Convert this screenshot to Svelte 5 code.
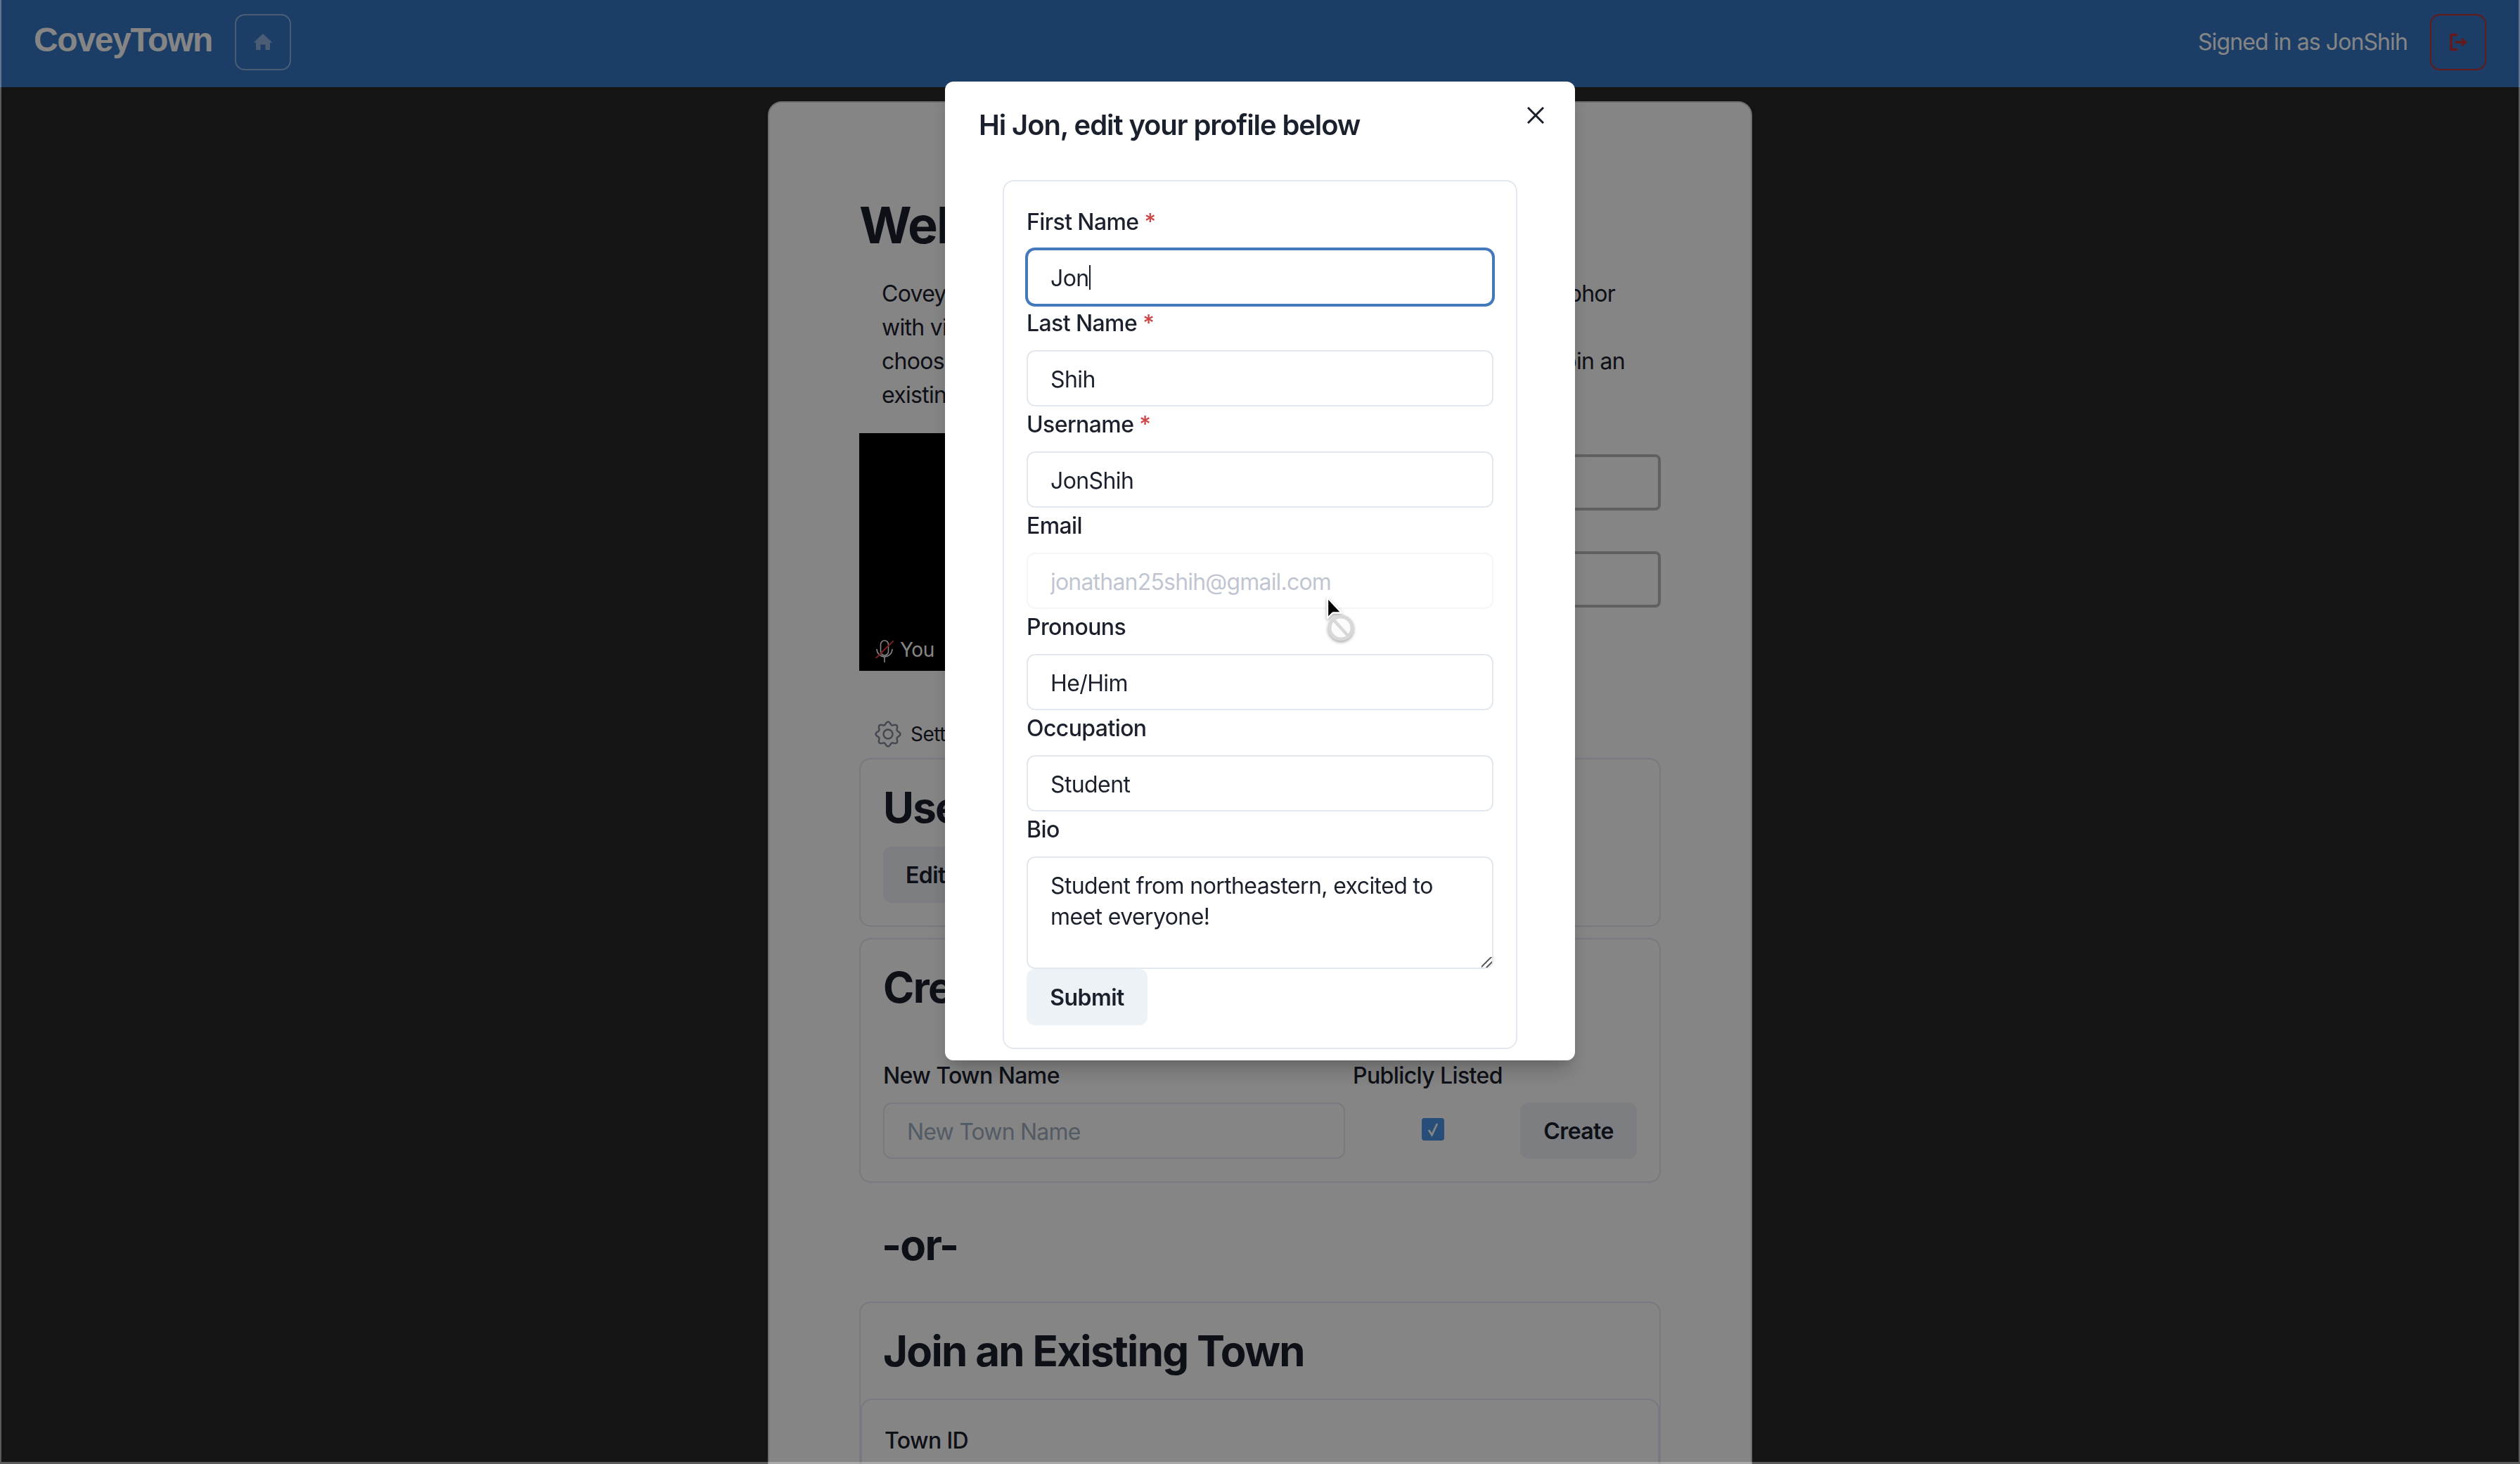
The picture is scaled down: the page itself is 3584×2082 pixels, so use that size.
<script>
  // profile modal fields, in form order
  const fields = [
    { label: "First Name", value: "Jon", required: true, focused: true },
    { label: "Last Name", value: "Shih", required: true },
    { label: "Username", value: "JonShih", required: true },
    { label: "Email", value: "jonathan25shih@gmail.com", disabled: true },
    { label: "Pronouns", value: "He/Him" },
    { label: "Occupation", value: "Student" }
  ];

  // gear outline: wavy circle with 8 lobes
  function gearPath(cx, cy, r, wave) {
    let d = "";
    for (let i = 0; i <= 160; i++) {
      const a = (i / 160) * Math.PI * 2 - Math.PI / 2;
      const rad = r + wave * Math.cos(a * 8);
      const x = cx + rad * Math.cos(a);
      const y = cy + rad * Math.sin(a);
      d += (i ? "L" : "M") + x.toFixed(2) + " " + y.toFixed(2);
    }
    return d + "Z";
  }
</script>

<div class="page">
  <header class="nav">
    <span class="logo">CoveyTown</span>
    <button class="nav-btn home" aria-label="Home">
      <svg width="28" height="24" viewBox="0 0 28 24"><path d="M14 0L27.5 12.5H24V23H17.5V15.5H10.5V23H4V12.5H.5Z" fill="currentColor"/></svg>
    </button>
    <span class="signed">Signed in as JonShih</span>
    <button class="nav-btn logout" aria-label="Sign out">
      <svg width="26" height="26" viewBox="0 0 26 26" fill="none" stroke="currentColor" stroke-width="3.4"><path d="M12 2.5H3V23.5H12"/><path d="M9 13H23"/><path d="M18 8l6 5-6 5" stroke-width="2.6"/></svg>
    </button>
  </header>

  <main class="card">
    <h1>Welcome to Covey.Town!</h1>
    <p class="intro">
      Covey.Town is a social platform that integrates a 2D game-like metaphor
      with video chat. To get started, setup your camera and microphone,
      choose a username, and then create a new town to hang out in, or join an
      existing town.
    </p>

    <div class="preview">
      <div class="video">
        <svg width="26" height="32" viewBox="0 0 26 32" fill="none" stroke="#fff" stroke-width="1.6">
          <rect x="7.5" y="1" width="11" height="21" rx="5.5"/>
          <path d="M2 13a11 11 0 0 0 22 0M13 24v8"/>
          <path d="M.7 26L25.7 1.3" stroke="#e53e3e" stroke-width="2"/>
        </svg>
        <span>You</span>
      </div>
      <div class="selects">
        <div class="select"></div>
        <div class="select"></div>
      </div>
    </div>

    <div class="settings">
      <svg width="38" height="38" viewBox="0 0 38 38" fill="none" stroke="#7f899b" stroke-width="2.4">
        <path d={gearPath(19, 19, 15.6, 1.9)}/>
        <circle cx="19" cy="19" r="6.5"/>
      </svg>
      <span>Settings</span>
    </div>

    <section class="box">
      <h2>User Profile</h2>
      <button class="grey edit">Edit Profile</button>
    </section>

    <section class="box">
      <h2>Create a New Town</h2>
      <div class="create-row">
        <div class="town-name">
          <span class="label">New Town Name</span>
          <input class="input" placeholder="New Town Name" />
        </div>
        <div class="listed">
          <span class="label">Publicly Listed</span>
          <span class="check">
            <svg width="20" height="22" viewBox="0 0 20 22" fill="none" stroke="#fff" stroke-width="2.8"><path d="M4 12l4.5 7 7.5-16"/></svg>
          </span>
        </div>
        <button class="grey create">Create</button>
      </div>
    </section>

    <h2 class="or">-or-</h2>

    <section class="box join">
      <h2>Join an Existing Town</h2>
      <div class="inner">
        <span class="label">Town ID</span>
      </div>
    </section>
  </main>
</div>

<div class="overlay">
  <div class="modal">
    <h2 class="modal-title">Hi Jon, edit your profile below</h2>
    <button class="close" aria-label="Close">
      <svg width="24" height="24" viewBox="0 0 24 24" stroke="currentColor" stroke-width="3"><path d="M1 1L23 23M23 1L1 23"/></svg>
    </button>
    <div class="modal-body">
      <form class="profile">
        {#each fields as f}
          <span class="label">{f.label}{#if f.required}<span class="req">*</span>{/if}</span>
          <div class="field">
            <input class="input" class:focused={f.focused} value={f.value} disabled={f.disabled} />
            {#if f.focused}<span class="caret"></span>{/if}
          </div>
        {/each}
        <span class="label">Bio</span>
        <textarea class="input bio" value="Student from northeastern, excited to meet everyone!"></textarea>
        <button type="button" class="submit">Submit</button>
      </form>
    </div>
  </div>
</div>

<!-- not-allowed mouse pointer from the screen recording -->
<svg class="pointer" width="52" height="72" viewBox="0 0 52 72">
  <circle cx="27" cy="48" r="16" fill="#fbfbfb" stroke="#d8d8d8" stroke-width="5"/>
  <path d="M17 37L37 59" stroke="#d8d8d8" stroke-width="4.5"/>
  <path d="M8 5V34L15.5 26.5H28Z" fill="#000" stroke="#fff" stroke-width="2.4" stroke-linejoin="round"/>
</svg>

<div class="frame"></div>

<style>
  :global(body) { margin: 0; background: #282828; overflow: hidden; }
  .page { width: 3584px; height: 2082px; overflow: hidden; background: #282828; font-family: Inter, "Liberation Sans", sans-serif; color: #1a202c; font-size: 32px; line-height: 48px; letter-spacing: -0.6px; }
  button { font-family: inherit; letter-spacing: -0.6px; cursor: pointer; }

  .nav { height: 124px; box-sizing: border-box; padding: 20px 48px 0; display: flex; align-items: flex-start; background: #3476c4; color: #fff; }
  .logo { font-family: "Liberation Sans", Arial, sans-serif; font-weight: 700; font-size: 48px; line-height: 74px; letter-spacing: -1.3px; }
  .nav-btn { width: 80px; height: 80px; padding: 0; background: none; border-radius: 14px; display: flex; align-items: center; justify-content: center; }
  .home { margin-left: 32px; border: 2px solid rgba(255,255,255,.45); color: rgba(255,255,255,.45); }
  .signed { margin-left: auto; margin-right: 32px; line-height: 80px; letter-spacing: -0.9px; }
  .logout { border: 2px solid #c53030; color: #c53030; }

  .card { width: 1400px; box-sizing: border-box; margin: 20px auto 0; padding: 128px 128px 0; background: #fff; border: 2px solid #d5d5d5; border-radius: 20px; }
  h1 { margin: 0 0 28px; font-size: 72px; line-height: 92px; font-weight: 700; letter-spacing: -2px; }
  .intro { margin: 0 0 30px; padding: 0 32px; letter-spacing: -0.72px; }
  .preview { display: flex; }
  .video { width: 600px; height: 338px; box-sizing: border-box; padding: 0 0 12px 23px; background: #000; color: #fff; display: flex; align-items: flex-end; gap: 9px; font-size: 28px; line-height: 36px; letter-spacing: -0.5px; }
  .selects { flex: 1; padding-top: 30px; display: flex; flex-direction: column; gap: 58px; }
  .select { height: 80px; box-sizing: border-box; border: 4px solid #b9b9b9; border-radius: 8px; }
  .settings { margin: 66px 0 10px 22px; display: flex; align-items: center; gap: 13px; font-size: 28px; letter-spacing: -0.5px; }

  .box { border: 2px solid #e2e8f0; border-radius: 16px; padding: 32px; margin-bottom: 16px; }
  h2 { margin: 0; font-size: 60px; line-height: 72px; font-weight: 700; letter-spacing: -1.7px; }
  .grey { height: 80px; padding: 0 32px; border: none; border-radius: 12px; background: #edf2f7; color: #1a202c; font-size: 32px; font-weight: 600; }
  .edit { margin-top: 20px; }
  .create-row { margin-top: 64px; display: flex; }
  .town-name { flex: 1; }
  .town-name .input { letter-spacing: -0.8px; }
  .listed { width: 228px; margin-left: 11px; }
  .listed .label { margin-bottom: 0; }
  .check { width: 32px; height: 32px; margin: 36px auto 0; border-radius: 4px; background: #4c94e8; display: flex; align-items: center; justify-content: center; }
  .create { width: 166px; margin: 64px 0 0 10px; padding: 0; }
  .or { margin: 52px 0 45px 32px; }
  .inner { margin: 32px -32px 0; height: 200px; padding: 32px; border: 2px solid #e2e8f0; border-radius: 16px; }

  .label { display: block; font-weight: 500; line-height: 48px; padding-top: 2px; margin-bottom: 14px; }
  .req { color: #cf4444; margin-left: 8px; }
  .field { position: relative; }
  .input { display: block; width: 100%; height: 80px; box-sizing: border-box; padding: 2px 32px 0; border: 2px solid #e2e8f0; border-radius: 12px; outline: none; background: #fff; color: #1a202c; font: 400 32px Inter, sans-serif; letter-spacing: -0.6px; }
  .input::placeholder { color: #a0aec0; }
  .input:disabled { opacity: .4; color: #5f6f8c; letter-spacing: -0.8px; }
  .focused { border-color: #4479bb; box-shadow: 0 0 0 2px #4479bb; }
  .caret { position: absolute; left: 89px; top: 23px; width: 2px; height: 35px; background: #1a202c; }
  .bio { height: 160px; padding: 18px 32px 14px; line-height: 44px; resize: vertical; }
  .bio::-webkit-resizer { background: linear-gradient(135deg, transparent 0 42%, #666 42% 52%, transparent 52% 68%, #666 68% 78%, transparent 78%); }

  .overlay { position: fixed; inset: 0; background: rgba(0,0,0,.48); display: flex; justify-content: center; align-items: flex-start; padding-top: 116px; font-family: Inter, "Liberation Sans", sans-serif; color: #1a202c; font-size: 32px; line-height: 48px; letter-spacing: -0.6px; }
  .modal { position: relative; width: 896px; height: 1392px; box-sizing: border-box; background: #fff; border-radius: 12px; box-shadow: 0 20px 30px -6px rgba(0,0,0,.2), 0 8px 12px -4px rgba(0,0,0,.1); }
  .modal-title { padding: 32px 48px; font-size: 40px; line-height: 60px; font-weight: 600; letter-spacing: -1.1px; }
  .close { position: absolute; top: 16px; right: 24px; width: 64px; height: 64px; padding: 0; background: none; border: none; color: #1a202c; display: flex; align-items: center; justify-content: center; }
  .modal-body { padding: 16px 48px; }
  .profile { margin: 0 34px; padding: 32px; border: 2px solid #e2e8f0; border-radius: 16px; }
  .submit { display: block; width: 172px; height: 80px; padding: 0; border: none; border-radius: 12px; background: #edf2f7; color: #1a202c; font-size: 32px; font-weight: 600; }

  .pointer { position: fixed; left: 1880px; top: 845px; filter: drop-shadow(0 2px 2px rgba(0,0,0,.35)); }
  .frame { position: fixed; inset: 0; border: solid rgba(255,255,255,.3); border-width: 0 2px 3px; pointer-events: none; }
</style>
